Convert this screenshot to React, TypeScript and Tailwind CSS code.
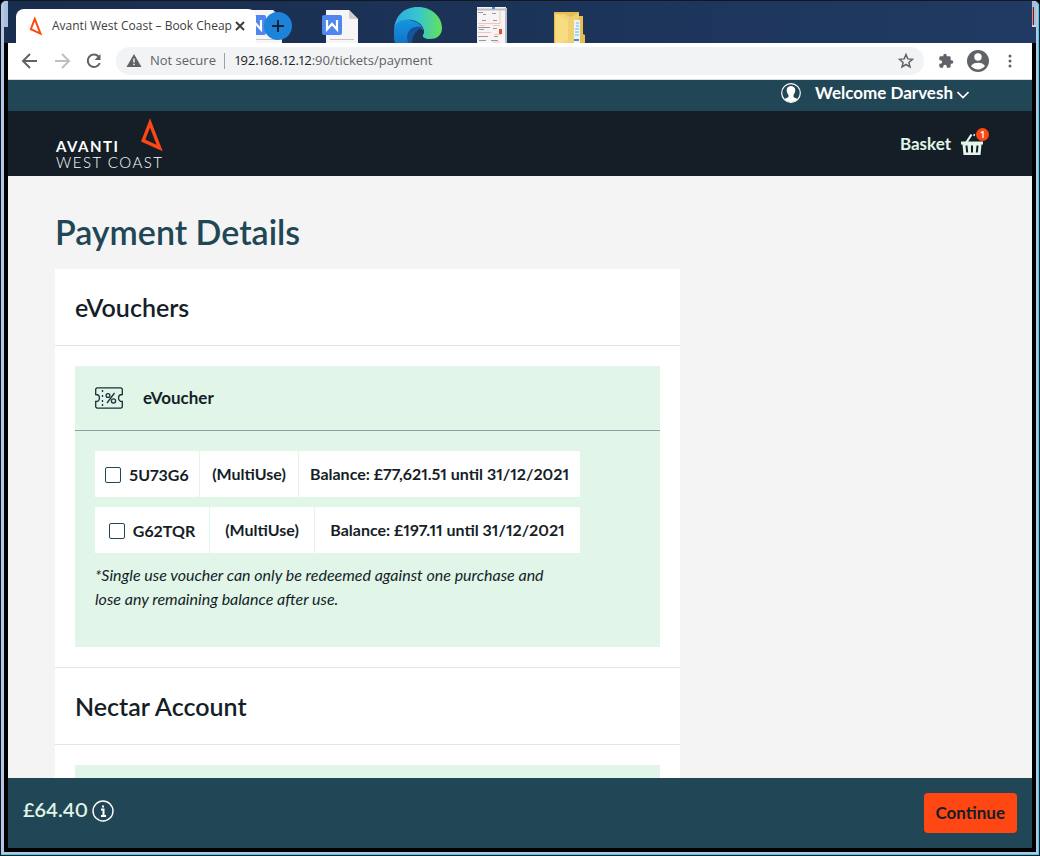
import React from "react";

const voucherRows = [
  { code: "5U73G6", use: "(MultiUse)", balance: "Balance: £77,621.51 until 31/12/2021", cols: "grid-cols-[105px_99px_1fr]" },
  { code: "G62TQR", use: "(MultiUse)", balance: "Balance: £197.11 until 31/12/2021", cols: "grid-cols-[115px_105px_1fr]" },
];

function Triangle({ className }: { className: string }) {
  return (
    <svg className={className} viewBox="0 0 22 34" fill="none" stroke="#ff4713" strokeWidth="3.4" aria-hidden="true">
      <path d="M9 5 2.2 22.5 18.6 30Z" />
    </svg>
  );
}

function WordFile() {
  return (
    <svg className="h-[33px] w-9" viewBox="0 0 36 33" aria-hidden="true">
      <path d="M4 0h23l9 9v24H4Z" fill="#f7f5f6" />
      <path d="M27 0v7q0 2 2 2h7Z" fill="#cfcdd0" />
      <path d="M8 29.500h24" stroke="#c4c4c4" />
      <rect y="5" width="20" height="20" rx="2" fill="#4f87ee" />
      <path d="M5 10v9.500l5-5.500 5 5.500V10" fill="none" stroke="#fff" strokeWidth="2.200" />
    </svg>
  );
}

function Edge() {
  return (
    <svg className="h-9 w-12" viewBox="0 0 48 36" aria-hidden="true">
      <defs>
        <linearGradient id="edgeTop"><stop stopColor="#2fa9df" /><stop offset=".5" stopColor="#36c6d0" /><stop offset="1" stopColor="#65e05a" /></linearGradient>
        <linearGradient id="edgeBody" x2="0" y2="1"><stop stopColor="#1695df" /><stop offset="1" stopColor="#1275c8" /></linearGradient>
      </defs>
      <path d="M0 22C2 6 12 0 24 0c14 0 24 10 24 21 0 8-6 11-12 11-5 0-8-2-7-4 3-3 0-13-11-15C9 12 2 16 0 22Z" fill="url(#edgeTop)" />
      <path d="M0 22c2-7 8-10 15-9 9 1 14 6 14 10-5-5-15-3-15 6 0 3 1 6 2 7H1Q-1 29 0 22Z" fill="url(#edgeBody)" />
      <path d="M29 20c-8-2-16 2-16 11l1 5h4c0-5 2-12 11-16Z" fill="#17539c" />
    </svg>
  );
}

function Paper() {
  return (
    <svg className="h-9 w-[30px]" viewBox="0 0 30 36" aria-hidden="true">
      <path d="M0 0h29v36H0Z" fill="#f6f4f5" />
      <path d="M29 1v35" stroke="#b8bcc6" strokeWidth="2" />
      <path d="M0 2.500h29" stroke="#bcbcc4" strokeWidth="2" />
      <path d="M1 5.500h5m0 2h3m6-1h4M5 13.500h4m7 0h4M1 20.500h12m-11 2h5m9-1h4M1 29.500h10m6 0h4M2 33.500h7m5 0h7" stroke="#9b989d" />
      <path d="M1 16.500h22V4M2 18.500h6m8 0h7M1 25.500h13m3 2h7M16 35h7" stroke="#f3c4bc" fill="none" />
      <path d="M22 22h3v5h-3Z" fill="#e85032" /><path d="M15 0h3v2h-3Z" fill="#4387d6" />
    </svg>
  );
}

function Folder() {
  return (
    <svg className="h-8 w-8" viewBox="0 0 32 32" aria-hidden="true">
      <path d="M0 1h25v4h4v18l2 1v8H0Z" fill="#e8bd50" />
      <path d="M1 3h10l5 3v26H1Z" fill="#f3d27a" /><path d="m2 3 12 6v19l-5 4H2Z" fill="#f8dc82" /><path d="m16 6 9-4v6l-5 3v21h-6V8Z" fill="#efcf6f" />
      <path d="M20 9h6v23h-6Z" fill="#e9f3f8" /><path d="M22 12h3m-3 3h3m-4 3h4m-4 3h4m-4 3h4" stroke="#71b5dc" /><path d="M20 29h5" stroke="#4b8fc0" strokeWidth="2" />
    </svg>
  );
}

function Ticket() {
  return (
    <svg className="h-[22px] w-7" viewBox="0 0 28 22" fill="none" stroke="#17313d" strokeWidth="1.300" aria-hidden="true">
      <path d="M2 .8h24l1.300 1.200v5.500c-5 0-5 7 0 7V20L26 21.200H2L.7 20v-5.500c5 0 5-7 0-7V2Z" />
      <path d="M7.500 3v2m0 3v2m0 3v2m0 2v2" />
      <circle cx="13" cy="8.500" r="1.900" /><circle cx="18.500" cy="14" r="2.100" /><path d="m19.500 6-7.500 10" />
    </svg>
  );
}

function Basket() {
  return (
    <svg className="h-[23px] w-[22px]" viewBox="0 0 22 23" fill="none" stroke="#e1f5e9" aria-hidden="true">
      <path d="m5 10 5.500-8.500" strokeWidth="2.200" /><path d="m13.500 1-.5 2" strokeWidth="1.500" />
      <path d="M0 8.500h22v3h-1.500L19.500 22h-17l-1-10.500H0Z" fill="#e1f5e9" stroke="none" />
      <path d="m5.500 12.500.7 7m4.800-7v7m5.500-7-.7 7" stroke="#151e27" strokeWidth="2" />
    </svg>
  );
}

export default function App() {
  return (
    <div className="flex h-screen flex-col bg-black font-[Lato,sans-serif] text-[#151e27] proportional-nums">
      <div className="flex min-h-0 flex-1 flex-col rounded-t-md border border-[#101820] bg-[#b4c7e7]">
      <div className="flex min-h-0 flex-1 flex-col rounded-tr-md border-r border-b border-[#35d3ee] pr-0.5 pb-0.5 pl-[3px]">
        <div className="flex min-h-0 flex-1 flex-col border-b-4 border-black bg-black">
          <div className="flex h-[42px] shrink-0">
          <div className="flex w-1 flex-col"><div className="h-[26px] bg-[#a6bfdf]" /><div className="flex-1 bg-[#1a2f51]" /></div>
          <header className="flex min-w-0 flex-1 items-end overflow-hidden bg-linear-to-r from-[#192d4e] to-[#203a63] font-['Open_Sans',sans-serif]">
            <div className="relative z-10 ml-2 flex h-[34px] w-60 shrink-0 items-center rounded-t-lg bg-white pl-3 text-[#3c4043]">
              <Triangle className="h-5 w-4 shrink-0" />
              <span className="ml-2 w-[180px] shrink-0 text-xs whitespace-nowrap">Avanti West Coast – Book Cheap</span>
              <button aria-label="Close tab" className="ml-0.5 text-[#3c4043]"><svg className="size-3" viewBox="0 0 12 12" stroke="currentColor" strokeWidth="2"><path d="m2 2 8 8m0-8-8 8" /></svg></button>
            </div>
            <div className="-ml-2.5"><WordFile /></div>
            <button aria-label="New tab" className="relative -ml-[18px] mb-[3px] flex size-7 items-center justify-center rounded-full bg-[#1c82da] text-[#10263b]"><svg className="size-3" viewBox="0 0 12 12" stroke="currentColor" strokeWidth="2"><path d="M6 0v12M0 6h12" /></svg></button>
            <div className="ml-[30px]"><WordFile /></div>
            <div className="ml-9"><Edge /></div>
            <div className="ml-[35px]"><Paper /></div>
            <div className="ml-[47px]"><Folder /></div>
          </header>
          <div className="flex w-1 flex-col"><div className="h-[26px] border-b-2 border-[#c3d4ec] bg-[#a6bfdf] pt-1.5"><div className="h-[18px] w-0.5 border-r border-[#5d2530] bg-[#e08a78]" /></div><div className="flex-1 bg-[#203a63]" /></div>
          </div>
          <nav className="mx-1 flex h-[37px] shrink-0 items-center border-b border-[#d9dcdf] bg-white pr-3.5 pl-3 font-['Open_Sans',sans-serif] text-[13px] text-[#5f6368]">
            <button aria-label="Back"><svg className="size-5" viewBox="0 0 20 20" fill="none" stroke="currentColor" strokeWidth="2"><path d="M17 10H4m6-7-7 7 7 7" /></svg></button>
            <button aria-label="Forward" className="ml-3 text-[#bcc0c3]"><svg className="size-5" viewBox="0 0 20 20" fill="none" stroke="currentColor" strokeWidth="2"><path d="M3 10h13m-6-7 7 7-7 7" /></svg></button>
            <button aria-label="Reload" className="ml-3"><svg className="size-5" viewBox="0 0 20 20" fill="none" stroke="currentColor" strokeWidth="2"><path d="M14.500 5.500A6.200 6.200 0 1 0 15.800 12" /><path d="M16.500 3v6h-6Z" fill="currentColor" stroke="none" /></svg></button>
            <div className="ml-3 flex h-7 min-w-0 flex-1 items-center rounded-full bg-[#f1f3f4] px-2.5">
              <svg className="h-4 w-4" viewBox="0 0 16 16" aria-hidden="true"><path d="M8 1 15.500 14H.5Z" fill="currentColor" /><path d="M8 5.500v4m0 1.300v1.500" stroke="#f1f3f4" strokeWidth="1.500" /></svg>
              <span className="ml-2">Not secure</span><span className="mr-2.5 ml-2 h-4 w-px bg-[#9aa0a6]" />
              <span className="flex-1"><span className="text-[#202124]">192.168.12.12</span>:90/tickets/payment</span>
              <button aria-label="Bookmark page"><svg className="size-4" viewBox="0 0 16 16" fill="none" stroke="currentColor" strokeWidth="1.500"><path d="m8 1.500 1.800 4.400 4.700.4-3.600 3.100 1.100 4.600L8 11.500 4 14l1.100-4.600-3.600-3.100 4.700-.4Z" /></svg></button>
            </div>
            <button aria-label="Extensions" className="ml-3.5"><svg className="size-4" viewBox="0 0 24 24" fill="currentColor"><path d="M20.500 11H19V7a2 2 0 0 0-2-2h-4V3.500a2.500 2.500 0 0 0-5 0V5H4a2 2 0 0 0-2 2v3.800h1.500a2.700 2.700 0 0 1 0 5.400H2V20a2 2 0 0 0 2 2h3.800v-1.500a2.700 2.700 0 0 1 5.400 0V22H17a2 2 0 0 0 2-2v-4h1.500a2.500 2.500 0 0 0 0-5Z" /></svg></button>
            <button aria-label="Profile" className="ml-3"><svg className="size-6" viewBox="0 0 24 24"><circle cx="12" cy="12" r="11" fill="currentColor" /><circle cx="12" cy="8" r="3.700" fill="#fff" /><path d="M5 17c2-4.500 12-4.500 14 0-4 4.500-10 4.500-14 0Z" fill="#fff" /></svg></button>
            <button aria-label="Browser menu" className="ml-3"><svg className="h-5 w-4" viewBox="0 0 16 20" fill="currentColor"><circle cx="8" cy="5" r="1.500" /><circle cx="8" cy="10" r="1.500" /><circle cx="8" cy="15" r="1.500" /></svg></button>
          </nav>
          <div className="mx-1 flex min-h-0 flex-1 flex-col overflow-hidden bg-[#f4f4f4]">
            <div className="flex h-[31px] shrink-0 items-center justify-end bg-[#214655] pr-[63px] pb-1.5">
              <button className="flex items-center text-[17px] leading-5 font-bold text-white">
                <svg className="mr-3.5 size-5" viewBox="0 0 20 20"><circle cx="10" cy="10" r="9.300" fill="none" stroke="white" strokeWidth="1.200" /><path d="M3.500 16.500C4 15 7 15 7.500 14v-2C4 7 6 3 10 3s6 4 2.500 9v2c.5 1 3.500 1 4 2.500-4 3.200-9 3.200-13 0Z" fill="white" /></svg>
                Welcome Darvesh
                <svg className="mt-1 ml-1 h-2 w-3" viewBox="0 0 12 8" fill="none" stroke="white" strokeWidth="1.600"><path d="m.5 1 5.500 5.500L11.500 1" /></svg>
              </button>
            </div>
            <header className="flex h-[65px] shrink-0 items-end justify-between bg-[#151e27] pr-[49px] pb-1.5 pl-12">
              <a href="#home" aria-label="Avanti West Coast" className="relative text-[15px] leading-4 text-white"><strong className="block tracking-widest">AVANTI</strong><span className="font-light tracking-widest">WEST COAST</span><Triangle className="absolute -top-5 right-0 h-[34px] w-[22px]" /></a>
              <a href="#basket" className="relative mb-3.5 flex items-center gap-2.5 text-[17px] leading-6 font-bold text-[#e1f5e9]">Basket <Basket /><span className="absolute -top-1 -right-1.5 size-[13px] rounded-full bg-[#ff4713] text-center text-[10px] leading-[13px] text-white">1</span></a>
            </header>
            <main className="min-h-0 flex-1 overflow-hidden px-[47px] pt-9">
              <h1 className="mb-[17px] text-[34px] leading-10 font-semibold text-[#214655]">Payment Details</h1>
              <div className="w-[625px] max-w-full bg-white">
                <section>
                  <h2 className="border-b border-[#e2e4e5] px-5 pt-5 pb-5 text-[25px] leading-9 font-semibold">eVouchers</h2>
                  <div className="border-b border-[#e2e4e5] p-5">
                    <div className="bg-[#e1f5e9]">
                      <div className="flex h-[65px] items-center gap-5 border-b border-[#8a9ea4] px-5 text-[17px] font-bold"><Ticket />eVoucher</div>
                      <div className="p-5 pb-[35px]">
                        <div className="flex w-[485px] max-w-full flex-col gap-2.5">
                          {voucherRows.map((row) => (
                            <div key={row.code} className={`grid h-[46px] bg-white text-base font-bold ${row.cols}`}>
                              <label className="flex items-center justify-center gap-2 border-r border-[#e1f5e9] pt-0.5"><input type="checkbox" className="size-4 appearance-none rounded-xs border border-[#214655] bg-white checked:bg-[#214655]" />{row.code}</label>
                              <span className="flex items-center justify-center border-r border-[#e1f5e9]">{row.use}</span>
                              <span className="flex items-center justify-center">{row.balance}</span>
                            </div>
                          ))}
                        </div>
                        <p className="mt-2.5 w-[475px] max-w-full text-base leading-6 italic">*Single use voucher can only be redeemed against one purchase and lose any remaining balance after use.</p>
                        <div className="h-px" />
                      </div>
                    </div>
                  </div>
                </section>
                <section><h2 className="border-b border-[#e2e4e5] px-5 pt-5 pb-5 text-[25px] leading-9 font-semibold">Nectar Account</h2><div className="p-5"><div className="h-20 bg-[#e1f5e9]" /></div></section>
              </div>
            </main>
            <footer className="flex h-[70px] shrink-0 items-center justify-between bg-[#214655] px-[15px]">
              <div className="flex items-center gap-1 pb-2 text-xl font-semibold text-[#e1f5e9]">£64.40<button aria-label="Price details" className="mt-1"><svg className="size-[22px]" viewBox="0 0 22 22" fill="none" stroke="white"><circle cx="11" cy="11" r="10" strokeWidth="1.400" /><path d="M9 9.500h2.500V16M9 16h5M10 6.500h2" strokeWidth="2" /></svg></button></div>
              <button className="h-10 rounded bg-[#ff4713] px-3 text-[17px] font-bold text-[#151e27]">Continue</button>
            </footer>
          </div>
        </div>
      </div>
      </div>
    </div>
  );
}
